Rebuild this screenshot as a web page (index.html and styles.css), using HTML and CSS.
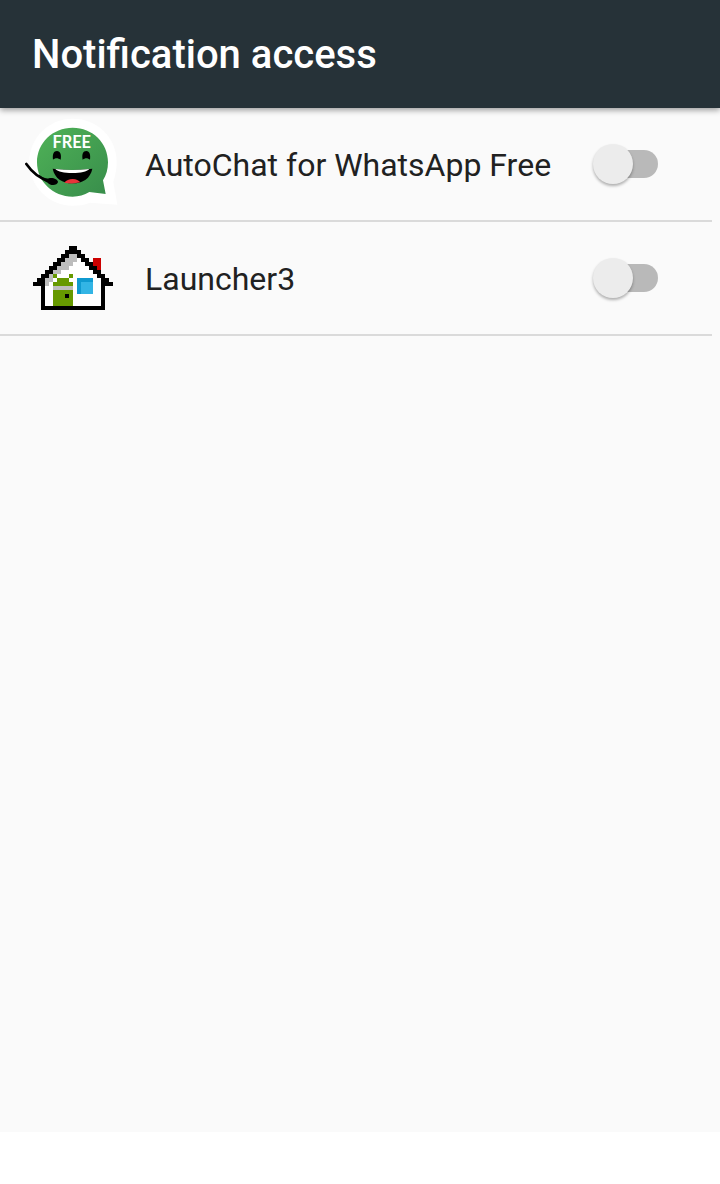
FILE: index.html
```
<!DOCTYPE html>
<html lang="en">
<head>
  <meta charset="UTF-8" />
  <meta name="viewport" content="width=device-width, initial-scale=1" />
  <title>Notification access</title>
  <link rel="stylesheet" href="styles.css">
</head>
<body>
  <header class="app-bar">
    <h1>Notification access</h1>
  </header>

  <main class="content">
    <ul class="app-list">
      <li class="app-row">
        <svg class="app-icon" viewBox="27 12 288 288" aria-hidden="true">
          <defs>
            <linearGradient id="bubble" x1="0" y1="0" x2="1" y2="1">
              <stop offset="0" stop-color="#4fb257" />
              <stop offset="1" stop-color="#388d4b" />
            </linearGradient>
          </defs>
          <path d="M170 20C245 20 302 77 302 150C302 176 296 196 292 210L304 278L222 272C205 279 188 281 170 281C98 281 40 223 40 150C40 77 98 20 170 20Z" fill="#fff" />
          <path d="M170 47C230 47 276 93 276 151C276 172 271 190 261 205L269 246L220 240C205 249 188 254 170 254C110 254 63 208 63 151C63 93 110 47 170 47Z" fill="url(#bubble)" />
          <text class="icon-label" x="167" y="109" text-anchor="middle">FREE</text>
          <path d="M111 143C109 127 113 117 123 117C133 117 137 129 134 143C129 141 126 139 122 139C118 139 114 141 111 143Z" />
          <path d="M200 143C197 127 201 117 211 117C221 117 224 129 222 143C218 141 215 139 211 139C207 139 204 141 200 143Z" />
          <path d="M110 170Q169 178 229 170C223 199 201 214 170 214C139 214 116 199 110 170Z" />
          <path d="M118 171Q169 177 220 171C212 179 195 183 169 183C144 183 126 179 118 171Z" fill="#fff" />
          <path d="M145 212C151 205 159 201 170 201C181 201 188 205 193 211C177 215 160 215 145 212Z" fill="#e8343a" />
          <path d="M31 156C47 179 68 199 99 207" fill="none" stroke="#000" stroke-width="8" stroke-linecap="round" />
          <path d="M69 188C80 198 90 201 99 199C110 196 126 202 126 210C124 221 103 222 95 212C84 207 73 199 67 190Z" />
        </svg>
        <label class="app-name" for="autochat">AutoChat for WhatsApp Free</label>
        <input class="switch" type="checkbox" role="switch" id="autochat" />
      </li>
      <li class="app-row">
        <svg class="app-icon" viewBox="-2 -4 24 24" shape-rendering="crispEdges" aria-hidden="true">
          <path d="M9 1h2v1h1v1h1v1h1v1h1v1h1v1h1v1h1v8H2V8h1V7h1V6h1V5h1V4h1V3h1V2h1z" fill="#fff" />
          <path d="M9 2h2v2h-1v1h-1v1h-2v1h-1v1h-1v1h-1v1h-1V8h1V7h1V6h1V5h1V4h1V3h1z" fill="#bdbdbd" />
          <path d="M5 7h1v1h-1zM9 7h1v1h-1zM6 8h3v1h1v1H5V9h1zM5 11h5v4H5z" fill="#690" />
          <path d="M5 8h1v1h-1zM6 7h3v1H6z" fill="#fff" />
          <path d="M5 10h5v1H5z" fill="#bdbdbd" />
          <path d="M11 8h4v4h-4z" fill="#0f9ad0" />
          <path d="M12 9h3v3h-3z" fill="#33b5e5" />
          <path d="M15 3h2v3h-2z" fill="#c00" />
          <path d="M9 0h2v1h1v1h1v1h1v1h1v1h1v1h1v1h1v1h1v1h1v1h-2v6H2v-6H0V9h1V8h1V7h1V6h1V5h1V4h1V3h1V2h1V1h1zM9 2v1H8v1H7v1H6v1H5v1H4v1H3v7h14V8h-1V7h-1V6h-1V5h-1V4h-1V3h-1V2z" fill-rule="evenodd" />
          <path d="M8 12h1v1H8z" />
        </svg>
        <label class="app-name" for="launcher">Launcher3</label>
        <input class="switch" type="checkbox" role="switch" id="launcher" />
      </li>
    </ul>
  </main>

  <footer class="bottom-bar"></footer>
</body>
</html>
```

FILE: styles.css
```
* {
  box-sizing: border-box;
}
body {
  display: flex;
  flex-direction: column;
  min-height: 100vh;
  margin: 0;
  background: #fafafa;
  font-family: Roboto, sans-serif;
  color: #212121;
}
.app-bar {
  padding: 31px 32px 29px;
  background: #263238;
  color: #fff;
  box-shadow: 0 2px 6px rgba(0, 0, 0, 0.4);
}
h1 {
  margin: 0;
  font-size: 40px;
  line-height: 48px;
  font-weight: 500;
}
.content {
  flex: 1;
}
.app-list {
  margin: 0;
  padding: 0 8px 0 0;
  list-style: none;
}
.app-row {
  display: flex;
  align-items: center;
  gap: 24px;
  height: 114px;
  padding: 0 54px 0 25px;
  border-bottom: 2px solid #dadada;
}
.app-icon {
  flex: none;
  width: 96px;
  height: 96px;
}
.icon-label {
  font-family: Lato, sans-serif;
  font-size: 49px;
  font-weight: 700;
  fill: #fff;
}
.app-name {
  flex: 1;
  padding-top: 2px;
  font-size: 32px;
  line-height: 40px;
}
.switch {
  flex: none;
  appearance: none;
  width: 59px;
  height: 28px;
  margin: 0;
  border-radius: 14px;
  background: #b9b9b9;
  cursor: pointer;
}
.switch::before {
  content: "";
  display: block;
  width: 40px;
  height: 40px;
  margin: -6px;
  border-radius: 50%;
  background: #ececec;
  box-shadow: 0 2px 3px rgba(0, 0, 0, 0.3);
  transition: transform 0.2s;
}
.switch:checked {
  background: #80cbc4;
}
.switch:checked::before {
  background: #009688;
  transform: translateX(31px);
}
.bottom-bar {
  height: 52px;
  background: #fff;
}
```
